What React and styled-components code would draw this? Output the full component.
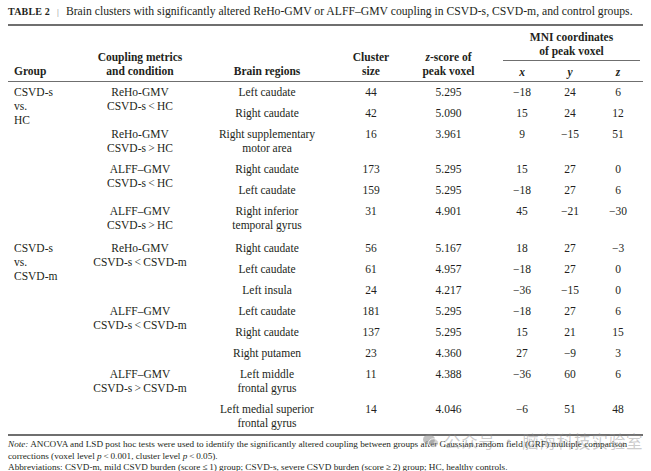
import React from 'react';
import styled, {createGlobalStyle} from 'styled-components';

const GlobalStyle = createGlobalStyle`
  body {
    margin: 0;
    background: #fff;
    color: #231f20;
    font-family: "Liberation Serif", "Times New Roman", serif;
  }
`;

const Page = styled.div`
  position: relative;
  width: 651px;
  height: 471px;
  padding: 6px 8px 0 8px;
  box-sizing: border-box;
  overflow: hidden;
`;

const Caption = styled.div`
  display: flex;
  align-items: center;
  gap: 7px;
  font-size: 11.7px;
  line-height: 12px;
  margin-bottom: 6px;
  white-space: nowrap;

  .label {
    font-weight: bold;
    font-size: 10px;
    letter-spacing: 0.2px;
  }

  .bar {
    color: #888;
    font-size: 9px;
  }
`;

const Table = styled.table`
  width: 635px;
  table-layout: fixed;
  border-collapse: collapse;
  border-top: 2px solid #6f6f6f;
  border-bottom: 2px solid #6f6f6f;
  font-size: 11.5px;
  line-height: 14px;
`;

const Col = styled.col`
  width: ${(p) => p.$w}px;
`;

const Th = styled.th`
  font-weight: bold;
  vertical-align: bottom;
  text-align: ${(p) => (p.$left ? 'left' : 'center')};
  padding: ${(p) => (p.$left ? '0 0 3px 6px' : '0 2px 3px')};
  border-bottom: 1.5px solid #6f6f6f;

  &.sub {
    padding: 4px 2px 2px;
    font-style: italic;
  }
`;

const MniTh = styled.th`
  font-weight: bold;
  padding: 4px 3px 0 6px;

  div {
    padding-bottom: 2px;
    border-bottom: 1px solid #6f6f6f;
  }
`;

const Td = styled.td`
  vertical-align: top;
  text-align: ${(p) => (p.$left ? 'left' : 'center')};
  padding: ${(p) => (p.$first ? 5 : 3)}px 2px 4px ${(p) => (p.$left ? 6 : 2)}px;
  white-space: nowrap;
`;

const Notes = styled.div`
  margin-top: 3px;
  font-size: 9.2px;
  line-height: 11.5px;
  white-space: nowrap;

  i {
    font-style: italic;
  }
`;

const Watermark = styled.div`
  position: absolute;
  left: 423px;
  top: 431px;
  display: flex;
  align-items: center;
  gap: 5px;
  font-family: "Noto Sans CJK SC", sans-serif;
  font-size: 16.5px;
  line-height: 20px;
  color: rgba(140, 140, 140, 0.45);
  letter-spacing: 0.8px;
  white-space: nowrap;
  pointer-events: none;
`;

const sections = [
  {
    group: ['CSVD-s', 'vs.', 'HC'],
    blocks: [
      {
        cond: ['ReHo-GMV', 'CSVD-s\u2009<\u2009HC'],
        rows: [
          [['Left caudate'], '44', '5.295', '\u221218', '24', '6'],
          [['Right caudate'], '42', '5.090', '15', '24', '12'],
        ],
      },
      {
        cond: ['ReHo-GMV', 'CSVD-s\u2009>\u2009HC'],
        rows: [[['Right supplementary', 'motor area'], '16', '3.961', '9', '\u221215', '51']],
      },
      {
        cond: ['ALFF\u2013GMV', 'CSVD-s\u2009<\u2009HC'],
        rows: [
          [['Right caudate'], '173', '5.295', '15', '27', '0'],
          [['Left caudate'], '159', '5.295', '\u221218', '27', '6'],
        ],
      },
      {
        cond: ['ALFF\u2013GMV', 'CSVD-s\u2009>\u2009HC'],
        rows: [[['Right inferior', 'temporal gyrus'], '31', '4.901', '45', '\u221221', '\u221230']],
      },
    ],
  },
  {
    group: ['CSVD-s', 'vs.', 'CSVD-m'],
    blocks: [
      {
        cond: ['ReHo-GMV', 'CSVD-s\u2009<\u2009CSVD-m'],
        rows: [
          [['Right caudate'], '56', '5.167', '18', '27', '\u22123'],
          [['Left caudate'], '61', '4.957', '\u221218', '27', '0'],
          [['Left insula'], '24', '4.217', '\u221236', '\u221215', '0'],
        ],
      },
      {
        cond: ['ALFF\u2013GMV', 'CSVD-s\u2009<\u2009CSVD-m'],
        rows: [
          [['Left caudate'], '181', '5.295', '\u221218', '27', '6'],
          [['Right caudate'], '137', '5.295', '15', '21', '15'],
          [['Right putamen'], '23', '4.360', '27', '\u22129', '3'],
        ],
      },
      {
        cond: ['ALFF\u2013GMV', 'CSVD-s\u2009>\u2009CSVD-m'],
        rows: [
          [['Left middle', 'frontal gyrus'], '11', '4.388', '\u221236', '60', '6'],
          [['Left medial superior', 'frontal gyrus'], '14', '4.046', '\u22126', '51', '48'],
        ],
      },
    ],
  },
];

const Lines = ({lines}) => lines.map((l, i) => <div key={i}>{l}</div>);

function Section({section, index}) {
  const total = section.blocks.reduce((n, b) => n + b.rows.length, 0);
  const out = [];
  section.blocks.forEach((block, bi) => {
    block.rows.forEach((row, ri) => {
      const first = bi === 0 && ri === 0;
      const pad = first && index > 0;
      out.push(
        <tr key={`${bi}-${ri}`}>
          {first && (
            <Td $left $first={pad} rowSpan={total}>
              <Lines lines={section.group} />
            </Td>
          )}
          {ri === 0 && (
            <Td $first={pad} rowSpan={block.rows.length}>
              <Lines lines={block.cond} />
            </Td>
          )}
          <Td $first={pad}>
            <Lines lines={row[0]} />
          </Td>
          {row.slice(1).map((v, ci) => (
            <Td key={ci} $first={pad}>
              {v}
            </Td>
          ))}
        </tr>
      );
    });
  });
  return out;
}

export default function App() {
  return (
    <Page>
      <GlobalStyle />
      <Caption>
        <span className="label">TABLE 2</span>
        <span className="bar">|</span>
        <span>
          Brain clusters with significantly altered ReHo-GMV or ALFF–GMV coupling in CSVD-s, CSVD-m, and control groups.
        </span>
      </Caption>
      <Table>
        <colgroup>
          <Col $w={80} />
          <Col $w={104} />
          <Col $w={150} />
          <Col $w={58} />
          <Col $w={97} />
          <Col $w={50} />
          <Col $w={46} />
          <Col $w={50} />
        </colgroup>
        <thead>
          <tr>
            <Th $left rowSpan={2}>Group</Th>
            <Th rowSpan={2}>
              Coupling metrics
              <br />
              and condition
            </Th>
            <Th rowSpan={2}>Brain regions</Th>
            <Th rowSpan={2}>
              Cluster
              <br />
              size
            </Th>
            <Th rowSpan={2}>
              <i>z</i>-score of
              <br />
              peak voxel
            </Th>
            <MniTh colSpan={3}>
              <div>
                MNI coordinates
                <br />
                of peak voxel
              </div>
            </MniTh>
          </tr>
          <tr>
            <Th className="sub">x</Th>
            <Th className="sub">y</Th>
            <Th className="sub">z</Th>
          </tr>
        </thead>
        <tbody>
          {sections.map((s, i) => (
            <Section key={i} section={s} index={i} />
          ))}
        </tbody>
      </Table>
      <Notes>
        <div>
          <i>Note:</i> ANCOVA and LSD post hoc tests were used to identify the significantly altered coupling between groups after Gaussian random field (GRF) multiple comparison
        </div>
        <div>
          corrections (voxel level <i>p</i>&thinsp;&lt;&thinsp;0.001, cluster level <i>p</i>&thinsp;&lt;&thinsp;0.05).
        </div>
        <div>
          Abbreviations: CSVD-m, mild CSVD burden (score&thinsp;≤&thinsp;1) group; CSVD-s, severe CSVD burden (score&thinsp;≥&thinsp;2) group; HC, healthy controls.
        </div>
      </Notes>
      <Watermark>
        <svg width="16" height="14" viewBox="0 0 16 14">
          <ellipse cx="6" cy="5.5" rx="6" ry="5" fill="rgba(140,140,140,0.55)" />
          <ellipse cx="10.5" cy="9" rx="5" ry="4.2" fill="rgba(140,140,140,0.4)" stroke="#fff" strokeWidth="0.8" />
        </svg>
        <span>公众号 · 脑海科技实验室</span>
      </Watermark>
    </Page>
  );
}
